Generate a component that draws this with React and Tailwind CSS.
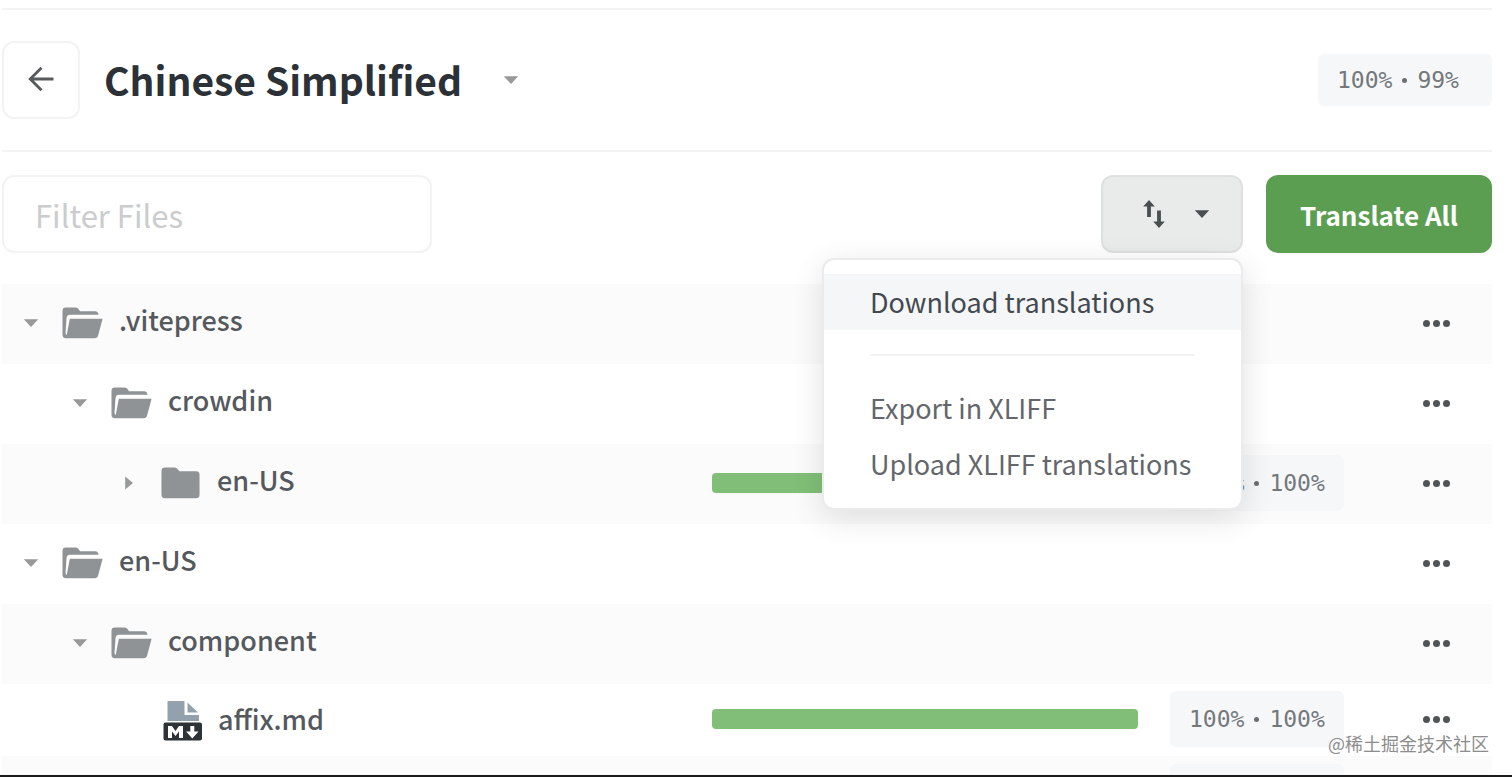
import React, { useState } from "react";

function Caret({ className = "", right = false }) {
  return (
    <svg viewBox="0 0 16 16" className={`size-4 shrink-0 ${className}`} aria-hidden="true">
      {right ? <path d="M4.2 1.4v13.2L12 8z" fill="currentColor" /> : <path d="M.8 4.2h14.4L8 12z" fill="currentColor" />}
    </svg>
  );
}

function FolderOpen() {
  return (
    <svg viewBox="0 0 42 32" className="h-8 w-[41px]" aria-hidden="true">
      <path
        d="M4 0h9.5q2 0 3.2 1.5L18.500 4H34q3 0 3.500 3.600H8.200Q5.300 7.600 4.700 10L3.600 26.500 4.800 28.500 8 11.600h33.600L37 28.700Q36.300 31.500 33.500 31.500H4Q.5 31.500.5 28V3.500Q.5 0 4 0z"
        fill="#8f9396"
      />
    </svg>
  );
}

function FolderClosed() {
  return (
    <svg viewBox="0 0 42 32" className="h-8 w-[41px]" aria-hidden="true">
      <path d="M5 0h9.500q2 0 3.200 1.500L20 4h17q3.500 0 3.500 3.500V28q0 3.500-3.500 3.500H5Q1.500 31.500 1.500 28V3.500Q1.500 0 5 0z" fill="#8f9396" />
    </svg>
  );
}

function MarkdownFile() {
  return (
    <svg viewBox="0 -3 42 43" className="h-[43px] w-[42px]" aria-hidden="true">
      <path d="M7.500 0H24.500v14h14.500V20H7.500z" fill="#93a1ad" />
      <path d="M27.500 1.500 38 11.500H27.500z" fill="#93a1ad" />
      <rect x="3.500" y="21.500" width="38.500" height="18" rx="2" fill="#2d3236" />
      <path d="M8 37V25h4l3.500 5 3.500-5h4v12h-4v-6.500l-3.500 4.500-3.500-4.500V37z" fill="#fff" />
      <path d="M30.300 25h4v5.500h4.200l-6.200 7-6.200-7h4.200z" fill="#fff" />
    </svg>
  );
}

function Stats({ a, b, className = "" }) {
  return (
    <span
      className={`flex w-[174px] shrink-0 items-center rounded-md bg-[#f5f7f9] pl-[19px] font-['DejaVu_Sans_Mono','Liberation_Mono',monospace] text-[23px] text-[#74787b] ${className}`}
    >
      {a}
      <i className="mx-[10px] size-[5px] rounded-full bg-[#6b6f72]" />
      {b}
    </span>
  );
}

const files = [
  { name: ".vitepress", depth: 0, kind: "open" },
  { name: "crowdin", depth: 1, kind: "open" },
  { name: "en-US", depth: 2, kind: "closed", progress: ["100%", "100%"] },
  { name: "en-US", depth: 0, kind: "open" },
  { name: "component", depth: 1, kind: "open" },
  { name: "affix.md", depth: 2, kind: "file", progress: ["100%", "100%"] },
];

const indent = ["pl-[14px]", "pl-[63px]", "pl-[112px]"];

function FileRow({ file, striped }) {
  const isFile = file.kind === "file";
  return (
    <li className={`flex shrink-0 items-center pr-8 pb-0.5 ${isFile ? "h-[72px]" : "h-20"} ${striped ? "bg-[#fbfbfb]" : "bg-white"}`}>
      <div className="grid min-w-0 flex-1 grid-cols-[minmax(0,5fr)_minmax(0,3fr)] items-center">
        <div className={`flex items-center ${indent[file.depth]}`}>
          {isFile ? (
            <span className="w-[30px]" />
          ) : (
            <button type="button" aria-label={`Toggle ${file.name}`} className="flex w-[30px] justify-center text-[#97999b]">
              <Caret right={file.kind === "closed"} />
            </button>
          )}
          <span className="ml-4">
            {file.kind === "open" && <FolderOpen />}
            {file.kind === "closed" && <FolderClosed />}
            {isFile && <MarkdownFile />}
          </span>
          <span className={`ml-4 truncate text-[27px] leading-10 font-medium text-[#55595d] ${isFile ? "" : "pb-1.5"}`}>{file.name}</span>
        </div>
        {file.progress && <div role="progressbar" aria-label={`${file.name} progress`} aria-valuenow={100} className="h-5 rounded-sm bg-[#81bf78]" />}
      </div>
      {file.progress ? <Stats a={file.progress[0]} b={file.progress[1]} className="ml-8 h-14" /> : <span className="ml-8 w-[174px]" />}
      <button type="button" aria-label={`More actions for ${file.name}`} className="ml-[68px] flex h-12 w-12 items-center justify-center gap-[3px]">
        <i className="size-[7px] rounded-full bg-[#505457]" />
        <i className="size-[7px] rounded-full bg-[#505457]" />
        <i className="size-[7px] rounded-full bg-[#505457]" />
      </button>
    </li>
  );
}

export default function App() {
  const [query, setQuery] = useState("");
  return (
    <main className="relative flex h-screen flex-col overflow-hidden border-b-2 border-[#1b1b1b] bg-white pt-2 pr-5 pl-0.5 font-['Noto_Sans_CJK_SC',sans-serif]">
      <header className="flex h-36 shrink-0 items-center border-y-2 border-[#f3f3f3]">
        <button type="button" aria-label="Back" className="flex size-[78px] items-center justify-center rounded-xl border-2 border-[#f3f3f3] pb-0.5 text-[#575b5e]">
          <svg viewBox="0 0 26 26" className="size-[26px]" fill="none" stroke="currentColor" strokeWidth="2.8" aria-hidden="true">
            <path d="M25.500 13H2M13.500 1.800 2.200 13l11.300 11.300" />
          </svg>
        </button>
        <h1 className="ml-6 pb-0.5 text-[39px] leading-[56px] font-bold text-[#2b3136]">Chinese Simplified</h1>
        <button type="button" aria-label="Choose language" className="ml-[41px] text-[#97999b]">
          <Caret />
        </button>
        <Stats a="100%" b="99%" className="ml-auto h-[52px]" />
      </header>

      <div className="mt-[23px] flex shrink-0 gap-[23px]">
        <input
          type="text"
          aria-label="Filter Files"
          placeholder="Filter Files"
          value={query}
          onChange={(e) => setQuery(e.target.value)}
          className="h-[78px] w-[430px] rounded-xl border-2 border-[#f3f3f3] px-[31px] text-[31px] text-[#55595d] outline-none placeholder:text-[#cbcccd]"
        />
        <div className="relative ml-auto">
          <button
            type="button"
            aria-label="Import and export"
            aria-expanded="true"
            className="flex h-[78px] w-[142px] items-center justify-center gap-7 rounded-xl border-2 border-[#dfe1e1] bg-[#e9ebeb] pl-2 text-[#494e51]"
          >
            <svg viewBox="0 0 24 30" className="h-[30px] w-6" aria-hidden="true">
              <path d="M7 1 1.200 7.500H5.100V18h3.800V7.500h3.900z" fill="currentColor" />
              <path d="M15.100 11.500h3.800V22.500h3.900L17 29l-5.800-6.500h3.900z" fill="currentColor" />
            </svg>
            <Caret />
          </button>
          <div role="menu" className="absolute top-full right-0 z-10 mt-[5px] w-[421px] rounded-xl border-2 border-[#ebebeb] bg-white pt-3.5 pb-4 text-[27px] whitespace-nowrap text-[#63666a] shadow-[0_8px_32px_rgba(0,0,0,0.12)]">
            <button type="button" role="menuitem" className="block h-14 w-full bg-[#f4f6f8] px-[46px] text-left text-[#43494e]">
              Download translations
            </button>
            <hr className="mx-[46px] my-6 border-t-2 border-[#f3f3f3]" />
            <button type="button" role="menuitem" className="block h-14 w-full px-[46px] text-left">
              Export in XLIFF
            </button>
            <button type="button" role="menuitem" className="block h-14 w-full px-[46px] text-left">
              Upload XLIFF translations
            </button>
          </div>
        </div>
        <button type="button" className="h-[78px] w-[226px] rounded-xl bg-[#5b9e52] text-[26px] font-bold text-white">
          Translate All
        </button>
      </div>

      <ul className="mt-[31px] flex min-h-0 flex-1 flex-col overflow-hidden">
        {files.map((file, i) => (
          <FileRow key={i} file={file} striped={i % 2 === 0} />
        ))}
        <li aria-hidden="true" className="flex flex-1 justify-end overflow-hidden bg-[#fbfbfb] pt-2 pr-[148px]">
          <span className="h-14 w-[174px] rounded-md bg-[#f5f7f9]" />
        </li>
      </ul>

      <p className="absolute right-[23px] bottom-[18px] text-lg leading-7 text-[#8d8d8d]">@稀土掘金技术社区</p>
    </main>
  );
}
